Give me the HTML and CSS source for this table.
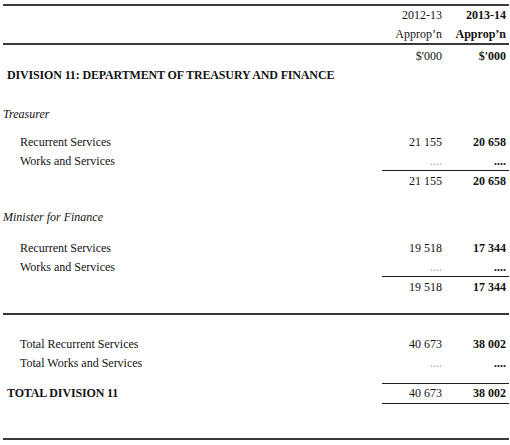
FILE: index.html
```html
<!DOCTYPE html>
<html>
<head>
<meta charset="utf-8">
<link rel="stylesheet" href="styles.css">
</head>
<body>
<div class="sheet">
  <div class="rule rule-top"></div>
  <div class="row hdr1"><span></span><span class="num">2012-13</span><span class="num b">2013-14</span></div>
  <div class="row hdr2"><span></span><span class="num">Approp’n</span><span class="num b">Approp’n</span></div>
  <div class="rule"></div>
  <div class="row units"><span></span><span class="num">$'000</span><span class="num b">$'000</span></div>
  <div class="row"><span class="lbl div b">DIVISION 11: DEPARTMENT OF TREASURY AND FINANCE</span><span></span><span></span></div>

  <div class="row sect"><span class="lbl it">Treasurer</span><span></span><span></span></div>
  <div class="row first"><span class="lbl ind">Recurrent Services</span><span class="num">21 155</span><span class="num b">20 658</span></div>
  <div class="row short"><span class="lbl ind">Works and Services</span><span class="num dots">....</span><span class="num b">....</span></div>
  <div class="sub-rule"></div>
  <div class="row subtotal"><span></span><span class="num">21 155</span><span class="num b">20 658</span></div>

  <div class="row sect2"><span class="lbl it">Minister for Finance</span><span></span><span></span></div>
  <div class="row first2"><span class="lbl ind">Recurrent Services</span><span class="num">19 518</span><span class="num b">17 344</span></div>
  <div class="row short"><span class="lbl ind">Works and Services</span><span class="num dots">....</span><span class="num b">....</span></div>
  <div class="sub-rule"></div>
  <div class="row subtotal"><span></span><span class="num">19 518</span><span class="num b">17 344</span></div>

  <div class="rule rule-mid"></div>
  <div class="row totals"><span class="lbl ind">Total Recurrent Services</span><span class="num">40 673</span><span class="num b">38 002</span></div>
  <div class="row"><span class="lbl ind">Total Works and Services</span><span class="num dots">....</span><span class="num b">....</span></div>
  <div class="sub-rule gap"></div>
  <div class="row"><span class="lbl div b">TOTAL DIVISION 11</span><span class="num">40 673</span><span class="num b">38 002</span></div>
  <div class="sub-rule"></div>
  <div class="rule rule-bottom"></div>
</div>
</body>
</html>
```

FILE: styles.css
```css
html, body {
  margin: 0;
  padding: 0;
  background: #fff;
}
body {
  font-family: "Liberation Serif", "Times New Roman", serif;
  font-size: 12px;
  color: #141414;
}
.sheet {
  width: 506px;
  margin: 0 1px 0 3px;
  padding-top: 4px;
}
.rule {
  border-top: 2px solid #3a3a3a;
}
.row {
  display: grid;
  grid-template-columns: 1fr 63px 64px;
  height: 19px;
  line-height: 19px;
  white-space: nowrap;
}
.num {
  text-align: right;
  padding-right: 3px;
}
.b { font-weight: bold; }
.it { font-style: italic; }
.lbl { padding-left: 0; }
.div { padding-left: 4px; letter-spacing: -0.15px; }
.ind { padding-left: 17px; }
.dots { color: #9a9a9a; }
.hdr2 { height: 18px; line-height: 18px; }
.units { margin-top: 2px; }
.sect { margin-top: 20px; }
.first { margin-top: 9px; }
.short { height: 18px; line-height: 18px; }
.sub-rule {
  margin-left: calc(100% - 127px);
  border-top: 1px solid #1e1e1e;
}
.sub-rule.gap { margin-top: 10px; }
.subtotal { margin-top: 1px; }
.sect2 { margin-top: 17px; }
.first2 { margin-top: 12px; }
.rule-mid { margin-top: 16px; }
.totals { margin-top: 20px; }
.rule-bottom { margin-top: 34px; }
```
